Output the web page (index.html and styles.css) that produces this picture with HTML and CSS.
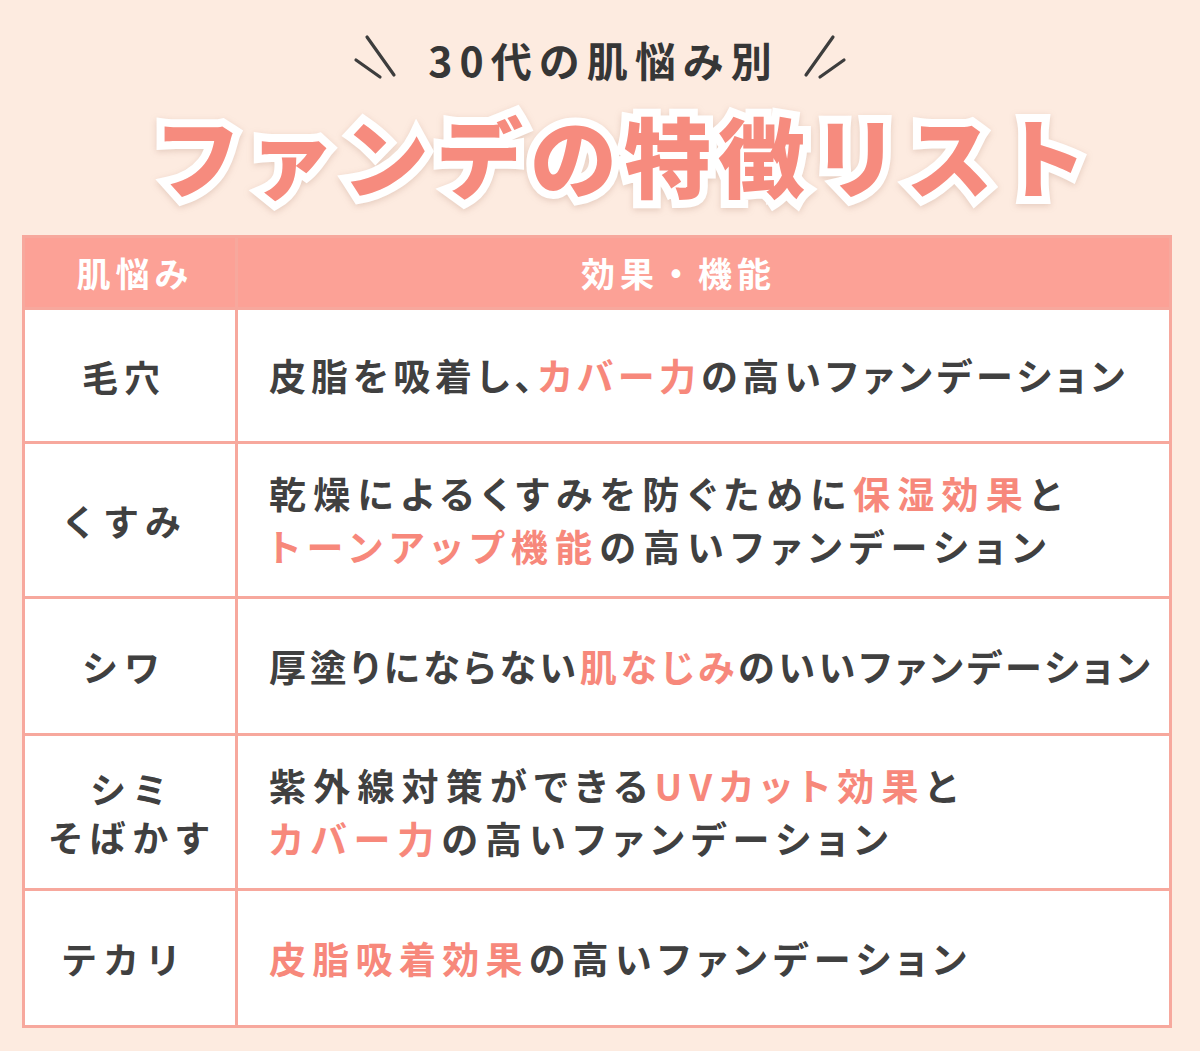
FILE: index.html
```html
<!DOCTYPE html>
<html lang="ja">
<head>
<meta charset="utf-8">
<link rel="stylesheet" href="styles.css">
</head>
<body>
<div class="page">
  <div class="sub">
    <svg class="deco" width="50" height="50" viewBox="0 0 50 50"><line x1="14" y1="3" x2="41" y2="41" /><line x1="3" y1="26" x2="27" y2="43" /></svg>
    <span class="subtext">30代の肌悩み別</span>
    <svg class="deco" width="50" height="50" viewBox="0 0 50 50"><line x1="36" y1="3" x2="9" y2="41" /><line x1="47" y1="26" x2="23" y2="43" /></svg>
  </div>
  <h1 class="title">ファンデの特徴リスト</h1>
  <table class="tbl">
    <thead>
      <tr class="hrow"><th class="c1">肌悩み</th><th class="c2">効果・機能</th></tr>
    </thead>
    <tbody>
      <tr class="r1"><td class="c1">毛穴</td><td class="c2 t-mid">皮脂を吸着し、<em>カバー力</em>の高いファンデーション</td></tr>
      <tr class="r2"><td class="c1">くすみ</td><td class="c2 t-wide">乾燥によるくすみを防ぐために<em>保湿効果</em>と<br><em>トーンアップ機能</em>の高いファンデーション</td></tr>
      <tr class="r3"><td class="c1">シワ</td><td class="c2 t-tight">厚塗りにならない<em>肌なじみ</em>のいいファンデーション</td></tr>
      <tr class="r2"><td class="c1 c1-wide">シミ<br>そばかす</td><td class="c2 t-wide">紫外線対策ができる<em>UVカット効果</em>と<br><em>カバー力</em>の高いファンデーション</td></tr>
      <tr class="r3"><td class="c1">テカリ</td><td class="c2 t-wider"><em>皮脂吸着効果</em>の高いファンデーション</td></tr>
    </tbody>
  </table>
</div>
</body>
</html>
```

FILE: styles.css
```css
html, body {
  margin: 0;
  padding: 0;
  background: #fdebe0;
}
body {
  font-family: "Noto Sans CJK JP", "Noto Sans", sans-serif;
  color: #404040;
}
.page {
  width: 1200px;
  height: 1051px;
  padding-top: 34px;
  box-sizing: border-box;
}
.sub {
  display: flex;
  justify-content: center;
  align-items: center;
  gap: 25px;
  height: 50px;
}
.deco line {
  stroke: #3d3d3d;
  stroke-width: 3.2;
  stroke-linecap: round;
}
.subtext {
  font-size: 41px;
  font-weight: 700;
  letter-spacing: 7px;
  line-height: 50px;
  color: #363636;
  margin-right: -7px;
}
.title {
  margin: 10px 0 0 0;
  text-align: center;
  font-size: 87px;
  font-weight: 900;
  line-height: 120px;
  letter-spacing: 7px;
  color: #f68b7e;
  -webkit-text-stroke: 16px #ffffff;
  paint-order: stroke fill;
  filter: drop-shadow(0 2px 3px rgba(160, 110, 90, 0.25));
  height: 120px;
  padding-left: 48px;
}
.tbl {
  margin: 21px 0 0 22px;
  width: 1150px;
  border-collapse: collapse;
  table-layout: fixed;
  background: #ffffff;
}
.tbl th, .tbl td {
  border: 3px solid #f7a89d;
  padding: 0;
  vertical-align: middle;
}
.tbl .c1 {
  text-align: center;
}
.tbl th.c1 {
  width: 200px;
  border-right: 2px solid #ffffff;
  padding-left: 10px;
}
.tbl th {
  background: #fca196;
  color: #ffffff;
  font-size: 34px;
  font-weight: 700;
  letter-spacing: 5px;
  height: 69px;
  line-height: 40px;
}
.tbl th.c2 {
  padding-right: 50px;
}
.tbl td {
  font-size: 37px;
  font-weight: 700;
  letter-spacing: 5px;
  line-height: 53px;
  font-feature-settings: "palt" 1;
}
.tbl td.c1 {
  padding-right: 12px;
  letter-spacing: 6px;
  line-height: 48px;
  font-feature-settings: normal;
  font-size: 36px;
}
.tbl td.c1-wide {
  padding-right: 0;
  padding-left: 4px;
}
.tbl td.c2 {
  padding-left: 31px;
  white-space: nowrap;
}
.tbl td.t-mid { letter-spacing: 4.9px; }
.tbl td.t-wide { letter-spacing: 7.2px; }
.tbl td.t-wider { letter-spacing: 6.3px; }
.tbl td.t-tight { letter-spacing: 3.8px; }
.tbl em {
  font-style: normal;
  color: #f7887b;
}
.r1 td { height: 131px; }
.r2 td { height: 152px; }
.r3 td { height: 134px; }
```
